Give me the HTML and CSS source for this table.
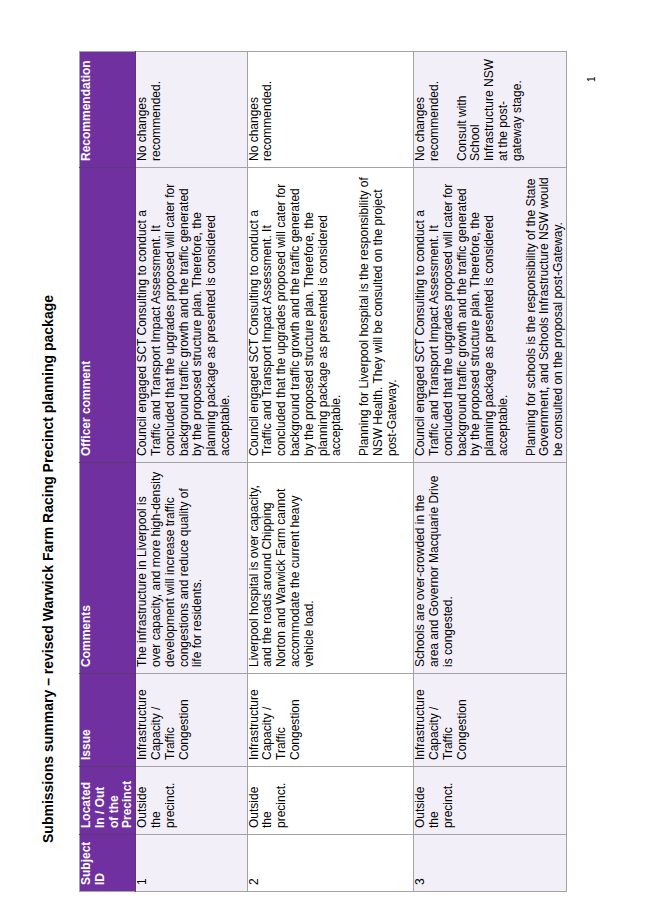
FILE: index.html
```html
<!DOCTYPE html>
<html lang="en">
<head>
<meta charset="utf-8">
<title>Submissions summary</title>
<link rel="stylesheet" href="styles.css">
</head>
<body>
<div class="page">
  <h1 class="title">Submissions summary – revised Warwick Farm Racing Precinct planning package</h1>
  <table class="summary">
    <colgroup>
      <col class="c-id"><col class="c-loc"><col class="c-issue"><col class="c-comments"><col class="c-officer"><col class="c-rec">
    </colgroup>
    <thead>
      <tr class="head">
        <th>Subject<br>ID</th>
        <th>Located<br>In / Out<br>of the<br>Precinct</th>
        <th>Issue</th>
        <th>Comments</th>
        <th>Officer comment</th>
        <th>Recommendation</th>
      </tr>
    </thead>
    <tbody>
      <tr class="row shaded spaced">
        <td>1</td>
        <td>Outside<br>the<br>precinct.</td>
        <td>Infrastructure<br>Capacity /<br>Traffic<br>Congestion</td>
        <td>The infrastructure in Liverpool is<br>over capacity, and more high-density<br>development will increase traffic<br>congestions and reduce quality of<br>life for residents.</td>
        <td>Council engaged SCT Consulting to conduct a<br>Traffic and Transport Impact Assessment. It<br>concluded that the upgrades proposed will cater for<br>background traffic growth and the traffic generated<br>by the proposed structure plan. Therefore, the<br>planning package as presented is considered<br>acceptable.</td>
        <td>No changes<br>recommended.</td>
      </tr>
      <tr class="row spaced">
        <td>2</td>
        <td>Outside<br>the<br>precinct.</td>
        <td>Infrastructure<br>Capacity /<br>Traffic<br>Congestion</td>
        <td>Liverpool hospital is over capacity,<br>and the roads around Chipping<br>Norton and Warwick Farm cannot<br>accommodate the current heavy<br>vehicle load.</td>
        <td>
          <p>Council engaged SCT Consulting to conduct a<br>Traffic and Transport Impact Assessment. It<br>concluded that the upgrades proposed will cater for<br>background traffic growth and the traffic generated<br>by the proposed structure plan. Therefore, the<br>planning package as presented is considered<br>acceptable.</p>
          <p class="next">Planning for Liverpool hospital is the responsibility of<br>NSW Health. They will be consulted on the project<br>post-Gateway.</p>
        </td>
        <td>No changes<br>recommended.</td>
      </tr>
      <tr class="row shaded">
        <td>3</td>
        <td>Outside<br>the<br>precinct.</td>
        <td>Infrastructure<br>Capacity /<br>Traffic<br>Congestion</td>
        <td>Schools are over-crowded in the<br>area and Governor Macquarie Drive<br>is congested.</td>
        <td>
          <p>Council engaged SCT Consulting to conduct a<br>Traffic and Transport Impact Assessment. It<br>concluded that the upgrades proposed will cater for<br>background traffic growth and the traffic generated<br>by the proposed structure plan. Therefore, the<br>planning package as presented is considered<br>acceptable.</p>
          <p class="next">Planning for schools is the responsibility of the State<br>Government, and Schools Infrastructure NSW would<br>be consulted on the proposal post-Gateway.</p>
        </td>
        <td>
          <p>No changes<br>recommended.</p>
          <p class="next">Consult with<br>School<br>Infrastructure NSW<br>at the post-<br>gateway stage.</p>
        </td>
      </tr>
    </tbody>
  </table>
  <div class="footer">1</div>
</div>
</body>
</html>
```

FILE: styles.css
```css
html, body {
  margin: 0;
  padding: 0;
  background: #ffffff;
  overflow: hidden;
}

body {
  width: 653px;
  height: 924px;
  font-family: "Liberation Sans", Arial, sans-serif;
  color: #000000;
}

/* The page is a landscape sheet turned a quarter-turn:
   text runs bottom-to-top and lines stack left-to-right. */
.page {
  writing-mode: vertical-rl;
  text-orientation: sideways;
  transform: rotate(180deg);
  width: 653px;
  height: 924px;
  box-sizing: border-box;
  padding-block-start: 39.5px;
}

.title {
  margin: 0;
  margin-inline-start: 81px;
  font-size: 14px;
  line-height: 16px;
  font-weight: bold;
  white-space: nowrap;
}

.summary {
  margin: 0;
  margin-block-start: 23.5px;
  margin-inline-start: 32px;
  inline-size: 840px;
  table-layout: fixed;
  border-collapse: collapse;
  font-size: 12px;
  line-height: 13.8px;
}

.c-id { inline-size: 57px; }
.c-loc { inline-size: 68px; }
.c-issue { inline-size: 93px; }
.c-comments { inline-size: 211px; }
.c-officer { inline-size: 295px; }
.c-rec { inline-size: 116px; }

.summary th,
.summary td {
  border: 1px solid #a3a3a3;
  padding-block: 0;
  padding-inline: 6px;
  text-align: start;
  vertical-align: top;
  white-space: nowrap;
}

.head th {
  background: #7030a0;
  color: #ffffff;
  font-weight: bold;
  border-color: #5a3a78;
  border-block-start-color: #a3a3a3;
}

.head th:first-child { border-inline-start-color: #a3a3a3; }
.head th:last-child { border-inline-end-color: #a3a3a3; }

.row td { background: #ffffff; }
.row.shaded td { background: #f3eff9; }
.row.spaced td { padding-block-end: 13.8px; }

.summary p { margin: 0; }
.summary p.next { margin-block-start: 13.8px; }

.footer {
  inline-size: 848px;
  margin-block-start: 19.5px;
  text-align: end;
  font-size: 10px;
  line-height: 12px;
}
```
